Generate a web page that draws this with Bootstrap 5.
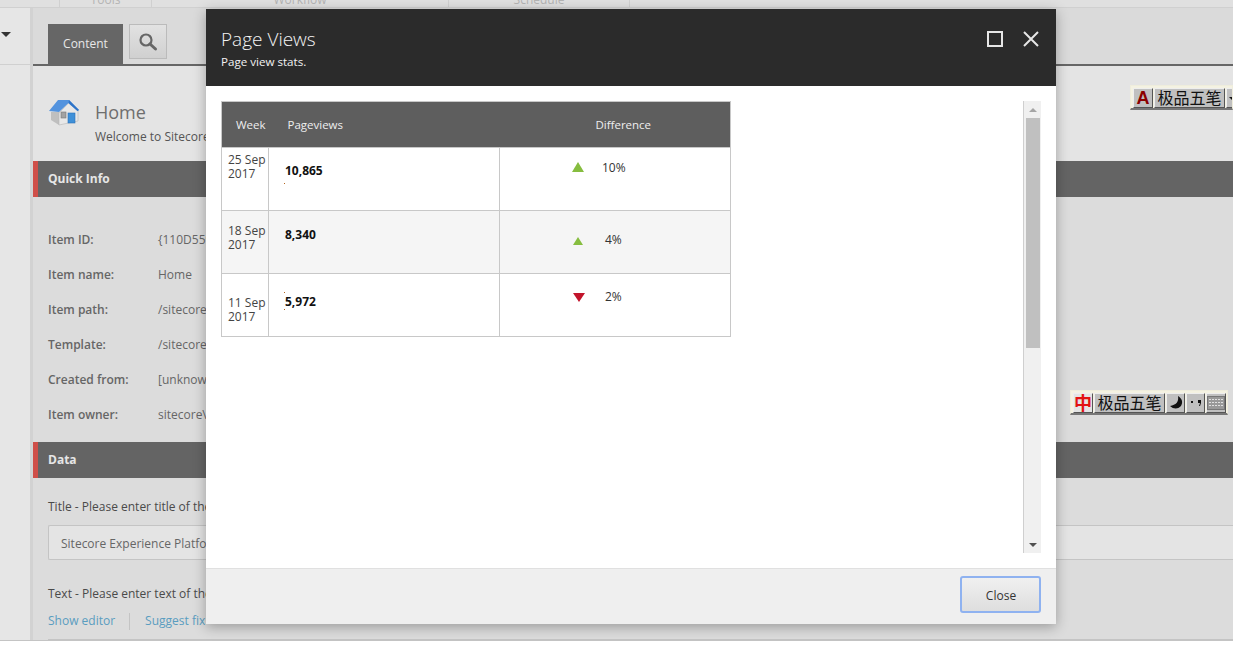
<!DOCTYPE html>
<html>
  <head>
    <meta charset="UTF-8" />
    <meta name="viewport" content="width=device-width, initial-scale=1.0" />
    <title>Page Views</title>
    <link href="https://cdn.jsdelivr.net/npm/bootstrap@5.3.0/dist/css/bootstrap.min.css" rel="stylesheet" />
    <style>
      html, body { height: 648px; overflow: hidden; }
      body { background: #fff; font-family: "Open Sans", "Liberation Sans", sans-serif; font-size: 12px; color: #4a4a4a; position: relative; }
      .shell { height: 641px; background: #dcdcdc; border-bottom: 1px solid #c4c4c4; overflow: hidden; }
      .top-strip { height: 8px; background: #e0e0e0; border-bottom: 1px solid #d0d0d0; }
      .top-tab { height: 7px; border-left: 1px solid #d0d0d0; overflow: hidden; font-size: 12px; line-height: 0; color: #b4b4b4; text-align: center; }
      .side-col { width: 33px; background: #e6e6e6; border-right: 3px solid #d2d2d2; flex: none; }
      .side-top { height: 57px; border-bottom: 1px solid #d0d0d0; padding: 24px 0 0 1px; }
      .side-arrow { width: 0; height: 0; border-left: 5px solid transparent; border-right: 5px solid transparent; border-top: 5px solid #333; }
      .tab-row { height: 58px; background: #dadada; border-bottom: 2px solid #666; padding: 16px 0 0 15px; gap: 6px; }
      .tab-active { width: 75px; height: 40px; background: #666; color: #e8e8e8; line-height: 40px; text-align: center; }
      .tab-search { width: 38px; height: 35px; background: linear-gradient(#e2e2e2, #d0d0d0); border: 1px solid #bbb; }
      .home-box { height: 95px; background: #e4e4e4; padding: 33px 0 0 15px; gap: 15px; }
      .home-title { font-size: 18px; line-height: 24px; color: #6e6e6e; padding-top: 1px; }
      .home-sub { line-height: 18px; margin-top: 4px; color: #555; }
      .section-bar { height: 36px; background: #646464; border-left: 5px solid #cf4f49; color: #e6e6e6; font-weight: 700; line-height: 36px; padding-left: 10px; }
      .info-list { height: 245px; padding: 33px 0 0 15px; }
      .info-row { height: 35px; line-height: 20px; }
      .info-key { width: 110px; font-weight: 600; color: #666; }
      .info-val { color: #666; }
      .data-box { padding: 21px 0 0 15px; }
      .title-label { line-height: 16px; }
      .field-input { height: 35px; background: #e4e4e4; border: 1px solid #c4c4c4; border-right: 0; border-radius: 2px 0 0 2px; line-height: 35px; padding-left: 12px; margin-top: 10px; color: #666; }
      .field-label { margin-top: 25px; line-height: 18px; }
      .link-row { margin-top: 9px; line-height: 18px; }
      .link-row a { color: #5a9dc0; text-decoration: none; }
      .link-sep { width: 1px; height: 17px; background: #c4c4c4; margin: 0 15px 0 14px; }
      .area-top { margin-top: 9px; height: 10px; background: #e4e4e4; border: 1px solid #c4c4c4; border-right: 0; }

      .views-dialog { position: absolute; left: 206px; top: 9px; width: 850px; height: 615px; background: #fff; box-shadow: 0 3px 12px rgba(0,0,0,.3); z-index: 5; }
      .views-head { height: 77px; background: #2b2b2b; color: #fff; padding: 16px 16px 0 15px; }
      .views-title { font-size: 19px; font-weight: 300; line-height: 28px; color: #f4f4f4; }
      .views-sub { font-size: 11.6px; line-height: 16px; margin-top: 1px; color: #f2f2f2; }
      .head-icons { gap: 18px; padding-top: 5px; }
      .views-body { height: 482px; padding: 15px 15px 0; }
      .stats-wrap { width: 802px; }
      .stats-table { width: 510px; border-collapse: collapse; table-layout: fixed; color: #333; }
      .stats-table th { background: #5e5e5e; color: #eee; font-weight: 400; height: 46px; font-size: 11.5px; padding-top: 1px; border: 1px solid #c8c8c8; border-width: 1px 0 1px 0; vertical-align: middle; }
      .stats-table th:first-child { border-left: 1px solid #c8c8c8; }
      .stats-table th:last-child { border-right: 1px solid #c8c8c8; }
      .stats-table td { border: 1px solid #c8c8c8; height: 63px; vertical-align: top; position: relative; }
      .stats-table tr:nth-child(2) td { background: #f5f5f5; }
      .head-week { padding-left: 14px; }
      .head-views { padding-left: 19px; }
      .head-diff { padding-left: 18px; }
      .week-cell { line-height: 14px; padding: 5px 0 0 6px; color: #444; }
      .count-cell { font-weight: 700; padding: 15px 0 0 16px; color: #111; line-height: 16px; }
      .diff-cell { padding-top: 12px; line-height: 16px; }
      .diff-wrap { padding-left: 71px; gap: 18px; }
      .week-two { padding-top: 13px; }
      .week-three { padding-top: 22px; }
      .count-two { padding-top: 16px; }
      .count-three { padding-top: 20px; }
      .diff-two { padding-top: 21px; }
      .diff-two .diff-wrap { gap: 22px; }
      .diff-three { padding-top: 15px; }
      .diff-three .diff-wrap { gap: 20px; }
      .spark-dot { position: absolute; left: 15px; width: 1px; height: 1px; background: #b5651d; }
      .arrow-up { width: 0; height: 0; border-left: 6px solid transparent; border-right: 6px solid transparent; border-bottom: 10px solid #86bd3f; margin-top: 2px; }
      .arrow-up.small-up { border-left-width: 5px; border-right-width: 5px; border-bottom-width: 8px; margin: 5px 0 0 1px; }
      .arrow-down { width: 0; height: 0; border-left: 6px solid transparent; border-right: 6px solid transparent; border-top: 9px solid #c2142b; margin: 4px 0 0 1px; }
      .scroll-rail { width: 18px; height: 452px; border-left: 1px solid #cfcfcf; background: #f0f0f0; }
      .scroll-cap { height: 17px; }
      .scroll-up { width: 0; height: 0; border-left: 4px solid transparent; border-right: 4px solid transparent; border-bottom: 4px solid #a5a5a5; }
      .scroll-down { width: 0; height: 0; border-left: 4px solid transparent; border-right: 4px solid transparent; border-top: 4px solid #505050; }
      .scroll-thumb { height: 230px; background: #c0c0c0; margin: 0 1px 0 2px; }
      .views-foot { height: 56px; background: #efefef; border-top: 1px solid #e0e0e0; padding: 7px 15px 0 0; }
      .close-btn { width: 81px; height: 37px; padding: 2px 0 0 1px; font-size: 12px; color: #333; border: 2px solid #8fb2f0; border-radius: 3px; background: linear-gradient(#f0f0f0, #dedede); font-family: inherit; }
      .close-btn:hover { color: #333; border-color: #8fb2f0; }

      .ime-bar { position: absolute; background: #f4f2e2; border: 1px solid #efeddc; border-bottom: 2px solid #777; padding: 2px; gap: 1px; z-index: 3; font-family: "Noto Sans CJK SC", sans-serif; color: #111; }
      .ime-key { background: #c0c0c0; border: 1px solid; border-color: #eee #555 #555 #eee; height: 20px; font-size: 16px; line-height: 16px; padding-bottom: 3px; display: flex; align-items: center; justify-content: center; overflow: hidden; flex: none; }
      .ime-letter { width: 20px; color: #8b0000; font-family: "Liberation Sans", sans-serif; font-weight: 700; font-size: 18px; padding-bottom: 0; }
      .ime-cn { width: 20px; background: #e4e4e4; color: #e31212; font-weight: 700; font-size: 18px; }
      .ime-name { width: 71px; }
      .ime-small { width: 19px; padding-bottom: 0; }
      .ime-small-wide { width: 20px; padding-bottom: 0; }
      .ime-drop { width: 14px; padding-bottom: 0; }
      .ime-top { left: 1130px; top: 85px; width: 103px; height: 25px; overflow: hidden; }
      .ime-low { left: 1070px; top: 390px; width: 158px; height: 25px; }
    </style>
  </head>
  <body>
    <div class="shell">
      <div class="top-strip d-flex">
        <div class="top-tab border-0" style="width: 59px"></div>
        <div class="top-tab" style="width: 92px">Tools</div>
        <div class="top-tab" style="width: 297px">Workflow</div>
        <div class="top-tab" style="width: 181px">Schedule</div>
        <div class="top-tab flex-grow-1"></div>
      </div>
      <div class="d-flex">
        <div class="side-col">
          <div class="side-top"><div class="side-arrow"></div></div>
        </div>
        <div class="flex-grow-1">
          <div class="tab-row d-flex align-items-start">
            <div class="tab-active">Content</div>
            <div class="tab-search d-flex align-items-center justify-content-center">
              <svg width="20" height="20" viewBox="0 0 20 20">
                <circle cx="8" cy="8" r="5.5" fill="none" stroke="#666" stroke-width="2.2" />
                <path d="M12 12l5.5 5" stroke="#666" stroke-width="3" stroke-linecap="round" />
              </svg>
            </div>
          </div>
          <div class="home-box d-flex">
            <svg width="32" height="28" viewBox="0 0 32 28">
              <path d="M3 13h8v13l-8-5z" fill="#bfbfbf" />
              <path d="M11 14l9.500-10L30 12v10l-19 4z" fill="#e8e8e8" stroke="#b5b5b5" stroke-width=".6" />
              <path d="M1 12L10 1h11l10 10-1.500 1-9-8L11 13z" fill="#5393de" />
              <path d="M21 1l10 10-1.500 1-9-8z" fill="#2f74c8" />
              <rect x="13" y="13" width="5" height="6" fill="#a2a2a2" stroke="#777" stroke-width=".6" />
              <rect x="20" y="14" width="7" height="10" fill="#3f90d8" stroke="#2a70b8" stroke-width=".6" />
            </svg>
            <div>
              <div class="home-title">Home</div>
              <div class="home-sub">Welcome to Sitecore</div>
            </div>
          </div>
          <div class="section-bar">Quick Info</div>
          <div class="info-list">
            <div class="info-row d-flex"><div class="info-key">Item ID:</div><div class="info-val">{110D559F</div></div>
            <div class="info-row d-flex"><div class="info-key">Item name:</div><div class="info-val">Home</div></div>
            <div class="info-row d-flex"><div class="info-key">Item path:</div><div class="info-val">/sitecore</div></div>
            <div class="info-row d-flex"><div class="info-key">Template:</div><div class="info-val">/sitecore</div></div>
            <div class="info-row d-flex"><div class="info-key">Created from:</div><div class="info-val">[unknown</div></div>
            <div class="info-row d-flex"><div class="info-key">Item owner:</div><div class="info-val">sitecore\</div></div>
          </div>
          <div class="section-bar">Data</div>
          <div class="data-box">
            <div class="title-label">Title - Please enter title of the</div>
            <div class="field-input">Sitecore Experience Platform</div>
            <div class="field-label">Text - Please enter text of the</div>
            <div class="link-row d-flex align-items-center">
              <a href="#">Show editor</a><span class="link-sep"></span><a href="#">Suggest fix</a>
            </div>
            <div class="area-top"></div>
          </div>
        </div>
      </div>
    </div>

    <div class="views-dialog d-flex flex-column">
      <div class="views-head d-flex justify-content-between">
        <div>
          <div class="views-title">Page Views</div>
          <div class="views-sub">Page view stats.</div>
        </div>
        <div class="head-icons d-flex">
          <svg width="18" height="18" viewBox="0 0 18 18"><rect x="2" y="2" width="14" height="14" fill="none" stroke="#e6e6e6" stroke-width="2" /></svg>
          <svg width="18" height="18" viewBox="0 0 18 18"><path d="M2 2l14 14M16 2L2 16" stroke="#e6e6e6" stroke-width="2" /></svg>
        </div>
      </div>
      <div class="views-body d-flex">
        <div class="stats-wrap">
          <table class="stats-table">
            <colgroup><col style="width: 47px" /><col style="width: 231px" /><col /></colgroup>
            <thead>
              <tr>
                <th class="head-week text-nowrap">Week</th>
                <th class="head-views">Pageviews</th>
                <th class="head-diff text-center">Difference</th>
              </tr>
            </thead>
            <tbody>
              <tr>
                <td class="week-cell">25 Sep 2017</td>
                <td class="count-cell">10,865<span class="spark-dot" style="top: 35px"></span></td>
                <td class="diff-cell"><div class="diff-wrap d-flex"><span class="arrow-up"></span><span>10%</span></div></td>
              </tr>
              <tr>
                <td class="week-cell week-two">18 Sep 2017</td>
                <td class="count-cell count-two">8,340</td>
                <td class="diff-cell diff-two"><div class="diff-wrap d-flex"><span class="arrow-up small-up"></span><span>4%</span></div></td>
              </tr>
              <tr>
                <td class="week-cell week-three">11 Sep 2017</td>
                <td class="count-cell count-three">5,972<span class="spark-dot" style="top: 18px"></span><span class="spark-dot" style="top: 35px"></span></td>
                <td class="diff-cell diff-three"><div class="diff-wrap d-flex"><span class="arrow-down"></span><span>2%</span></div></td>
              </tr>
            </tbody>
          </table>
        </div>
        <div class="scroll-rail d-flex flex-column">
          <div class="scroll-cap d-flex align-items-center justify-content-center"><span class="scroll-up"></span></div>
          <div class="scroll-thumb"></div>
          <div class="flex-grow-1"></div>
          <div class="scroll-cap d-flex align-items-center justify-content-center"><span class="scroll-down"></span></div>
        </div>
      </div>
      <div class="views-foot d-flex justify-content-end align-items-start">
        <button type="button" class="btn close-btn">Close</button>
      </div>
    </div>

    <div class="ime-bar ime-top d-flex">
      <div class="ime-key ime-letter">A</div>
      <div class="ime-key ime-name">极品五笔</div>
      <div class="ime-key ime-drop">
        <svg width="8" height="8" viewBox="0 0 8 8"><path d="M0 3h8L4 7z" fill="#111" /></svg>
      </div>
    </div>
    <div class="ime-bar ime-low d-flex">
      <div class="ime-key ime-cn">中</div>
      <div class="ime-key ime-name">极品五笔</div>
      <div class="ime-key ime-small">
        <svg width="16" height="16" viewBox="0 0 16 16"><path d="M10 1c1 6-2 9-8 10 5 5 13 2 12-5-.4-2-2-4-4-5z" fill="#111" /></svg>
      </div>
      <div class="ime-key ime-small">
        <svg width="12" height="10" viewBox="0 0 12 10"><rect x="1" y="3" width="2" height="2" fill="#111" /><path d="M8 2h3v3l-1 3H9l1-3H8z" fill="#111" /></svg>
      </div>
      <div class="ime-key ime-small-wide">
        <svg width="18" height="14" viewBox="0 0 18 14"><rect x=".5" y=".5" width="17" height="13" fill="#999" stroke="#777" /><path d="M2 3.500h14M2 6.500h14M2 9.500h14" stroke="#e0e0e0" stroke-dasharray="2 1" /></svg>
      </div>
    </div>
  </body>
</html>
